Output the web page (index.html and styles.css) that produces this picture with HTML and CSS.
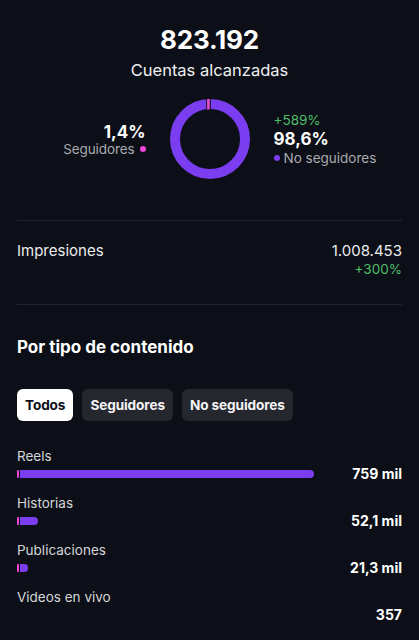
FILE: index.html
```html
<!DOCTYPE html>
<html lang="es">
<head>
<meta charset="utf-8">
<link rel="stylesheet" href="styles.css">
</head>
<body>
<main class="page">
  <section class="hero">
    <div class="hero-number">823.192</div>
    <div class="hero-label">Cuentas alcanzadas</div>
    <div class="donut-row">
      <div class="side side-left">
        <div class="pct">1,4%</div>
        <div class="legend">Seguidores <span class="dot dot-pink"></span></div>
      </div>
      <svg class="donut" width="80" height="80" viewBox="0 0 80 80">
        <circle cx="40" cy="40" r="35" fill="none" stroke="#7a3df0" stroke-width="10"/>
        <rect x="36.2" y="0" width="4.6" height="10.5" fill="#0c0f17"/>
        <rect x="37.1" y="0" width="2.6" height="10.5" fill="#ec49d6"/>
      </svg>
      <div class="side side-right">
        <div class="delta">+589%</div>
        <div class="pct">98,6%</div>
        <div class="legend"><span class="dot dot-purple"></span> No seguidores</div>
      </div>
    </div>
  </section>

  <hr class="divider divider-1">

  <section class="metric">
    <div class="metric-name">Impresiones</div>
    <div class="metric-values">
      <div class="metric-value">1.008.453</div>
      <div class="delta">+300%</div>
    </div>
  </section>

  <hr class="divider divider-2">

  <h2 class="section-title">Por tipo de contenido</h2>

  <div class="tabs">
    <button class="tab tab-active">Todos</button>
    <button class="tab">Seguidores</button>
    <button class="tab">No seguidores</button>
  </div>

  <ul class="bars">
    <li class="bar-item">
      <div class="bar-label">Reels</div>
      <div class="bar-row">
        <div class="bar-track"><div class="bar" style="width: 297px"><span class="bar-pink"></span><span class="bar-purple"></span></div></div>
        <div class="bar-value">759 mil</div>
      </div>
    </li>
    <li class="bar-item">
      <div class="bar-label">Historias</div>
      <div class="bar-row">
        <div class="bar-track"><div class="bar" style="width: 21px"><span class="bar-pink"></span><span class="bar-purple"></span></div></div>
        <div class="bar-value">52,1 mil</div>
      </div>
    </li>
    <li class="bar-item">
      <div class="bar-label">Publicaciones</div>
      <div class="bar-row">
        <div class="bar-track"><div class="bar" style="width: 11px"><span class="bar-pink"></span><span class="bar-purple"></span></div></div>
        <div class="bar-value">21,3 mil</div>
      </div>
    </li>
    <li class="bar-item">
      <div class="bar-label">Videos en vivo</div>
      <div class="bar-row">
        <div class="bar-track"></div>
        <div class="bar-value">357</div>
      </div>
    </li>
  </ul>
</main>
</body>
</html>
```

FILE: styles.css
```css
* { box-sizing: border-box; }

html, body {
  margin: 0;
  padding: 0;
  background: #0c0f17;
}

body {
  font-family: Inter, "Noto Sans", sans-serif;
  color: #f2f2f3;
  -webkit-font-smoothing: antialiased;
}

.page {
  padding: 24px 17px 0;
}

.hero {
  display: flex;
  flex-direction: column;
  align-items: center;
}

.hero-number {
  font-size: 26px;
  line-height: 32px;
  font-weight: 700;
  color: #ffffff;
  letter-spacing: -0.2px;
}

.hero-label {
  margin-top: 3px;
  font-size: 16.5px;
  line-height: 22px;
  color: #f0f0f2;
}

.donut-row {
  margin-top: 18px;
  width: 100%;
  display: grid;
  grid-template-columns: 1fr auto 1fr;
  column-gap: 24px;
  align-items: center;
}

.donut { display: block; }

.side { display: flex; flex-direction: column; }
.side-left { align-items: flex-end; text-align: right; padding-top: 2px; }
.side-left .legend { margin-top: -2px; gap: 5px; letter-spacing: -0.1px; }
.side-right { align-items: flex-start; }

.pct {
  font-size: 17px;
  line-height: 20px;
  font-weight: 700;
  color: #ffffff;
}

.legend {
  font-size: 13.5px;
  line-height: 18px;
  color: #a9aab0;
  display: flex;
  align-items: center;
  gap: 4px;
}

.dot {
  display: inline-block;
  width: 6px;
  height: 6px;
  border-radius: 50%;
}
.dot-pink { background: #ee48d6; }
.dot-purple { background: #7a3df0; }

.delta {
  font-size: 13.5px;
  line-height: 17px;
  color: #4fbf68;
}

.divider {
  margin: 0;
  border: 0;
  height: 1px;
  background: #20232b;
}
.divider-1 { margin-top: 41px; }
.divider-2 { margin-top: 26px; }

.metric {
  margin-top: 20px;
  display: flex;
  justify-content: space-between;
  align-items: flex-start;
}

.metric-name {
  font-size: 15px;
  line-height: 20px;
  color: #ececee;
}

.metric-values {
  display: flex;
  flex-direction: column;
  align-items: flex-end;
}

.metric-value {
  font-size: 15px;
  line-height: 20px;
  color: #ececee;
}

.section-title {
  margin: 31px 0 0;
  font-size: 17px;
  line-height: 22px;
  font-weight: 700;
  color: #ffffff;
}

.tabs {
  margin-top: 31px;
  display: flex;
  gap: 9px;
}

.tab {
  font-family: inherit;
  height: 32px;
  padding: 0 8px;
  border: 0;
  border-radius: 6px;
  background: #25272e;
  color: #f4f4f5;
  font-size: 13.6px;
  font-weight: 700;
  letter-spacing: -0.1px;
}
.tab-active {
  background: #ffffff;
  color: #0c0f17;
}

.bars {
  list-style: none;
  margin: 27px 0 0;
  padding: 0;
  display: flex;
  flex-direction: column;
  gap: 12px;
}

.bar-label {
  font-size: 13.5px;
  line-height: 16px;
  color: #d6d6d9;
}

.bar-row {
  display: flex;
  align-items: center;
  justify-content: space-between;
  height: 19px;
}

.bar-track {
  flex: 1;
  height: 8px;
}

.bar {
  height: 8px;
  display: flex;
  gap: 1px;
}

.bar-pink {
  width: 2px;
  height: 8px;
  background: #ee48d6;
  border-radius: 1px;
  flex: none;
}

.bar-purple {
  flex: 1;
  height: 8px;
  background: #7a3df0;
  border-radius: 0 4px 4px 0;
}

.bar-value {
  font-size: 14px;
  line-height: 19px;
  font-weight: 700;
  color: #ffffff;
  padding-left: 12px;
}
```
